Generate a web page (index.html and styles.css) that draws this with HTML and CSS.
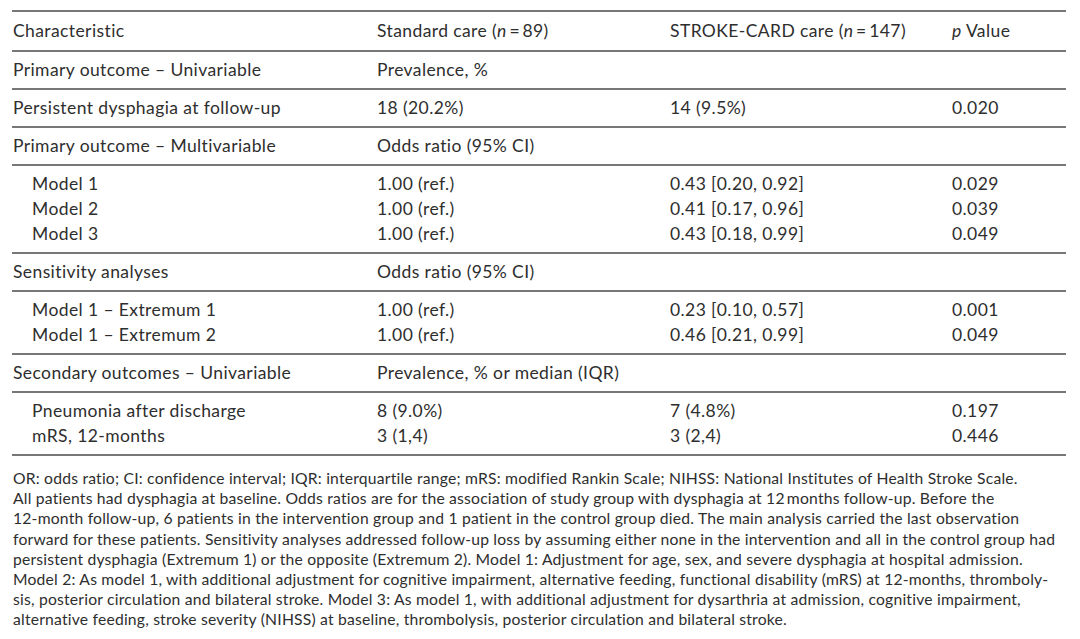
FILE: index.html
```html
<!DOCTYPE html>
<html lang="en">
<head>
<meta charset="utf-8">
<title>Table</title>
<link rel="stylesheet" href="styles.css">
</head>
<body>
<div class="page">
  <table class="outcomes">
    <colgroup>
      <col class="c1"><col class="c2"><col class="c3"><col class="c4">
    </colgroup>
    <thead>
      <tr>
        <th>Characteristic</th>
        <th>Standard care (<i>n</i>&#8201;=&#8201;89)</th>
        <th>STROKE-CARD care (<i>n</i>&#8201;=&#8201;147)</th>
        <th><i>p</i> Value</th>
      </tr>
    </thead>
    <tbody>
      <tr><td>Primary outcome – Univariable</td><td>Prevalence, %</td><td></td><td></td></tr>
    </tbody>
    <tbody>
      <tr><td>Persistent dysphagia at follow-up</td><td>18 (20.2%)</td><td>14 (9.5%)</td><td>0.020</td></tr>
    </tbody>
    <tbody>
      <tr><td>Primary outcome – Multivariable</td><td>Odds ratio (95% CI)</td><td></td><td></td></tr>
    </tbody>
    <tbody>
      <tr><td class="ind">Model 1</td><td>1.00 (ref.)</td><td>0.43 [0.20, 0.92]</td><td>0.029</td></tr>
      <tr><td class="ind">Model 2</td><td>1.00 (ref.)</td><td>0.41 [0.17, 0.96]</td><td>0.039</td></tr>
      <tr><td class="ind">Model 3</td><td>1.00 (ref.)</td><td>0.43 [0.18, 0.99]</td><td>0.049</td></tr>
    </tbody>
    <tbody>
      <tr><td>Sensitivity analyses</td><td>Odds ratio (95% CI)</td><td></td><td></td></tr>
    </tbody>
    <tbody>
      <tr><td class="ind">Model 1 – Extremum 1</td><td>1.00 (ref.)</td><td>0.23 [0.10, 0.57]</td><td>0.001</td></tr>
      <tr><td class="ind">Model 1 – Extremum 2</td><td>1.00 (ref.)</td><td>0.46 [0.21, 0.99]</td><td>0.049</td></tr>
    </tbody>
    <tbody>
      <tr><td>Secondary outcomes – Univariable</td><td>Prevalence, % or median (IQR)</td><td></td><td></td></tr>
    </tbody>
    <tbody>
      <tr><td class="ind">Pneumonia after discharge</td><td>8 (9.0%)</td><td>7 (4.8%)</td><td>0.197</td></tr>
      <tr><td class="ind">mRS, 12-months</td><td>3 (1,4)</td><td>3 (2,4)</td><td>0.446</td></tr>
    </tbody>
  </table>
  <p class="note">OR: odds ratio; CI: confidence interval; IQR: interquartile range; mRS: modified Rankin Scale; NIHSS: National Institutes of Health Stroke Scale.<br>All patients had dysphagia at baseline. Odds ratios are for the association of study group with dysphagia at 12&#8201;months follow-up. Before the<br>12-month follow-up, 6 patients in the intervention group and 1 patient in the control group died. The main analysis carried the last observation<br>forward for these patients. Sensitivity analyses addressed follow-up loss by assuming either none in the intervention and all in the control group had<br>persistent dysphagia (Extremum 1) or the opposite (Extremum 2). Model 1: Adjustment for age, sex, and severe dysphagia at hospital admission.<br>Model 2: As model 1, with additional adjustment for cognitive impairment, alternative feeding, functional disability (mRS) at 12-months, thromboly-<br>sis, posterior circulation and bilateral stroke. Model 3: As model 1, with additional adjustment for dysarthria at admission, cognitive impairment,<br>alternative feeding, stroke severity (NIHSS) at baseline, thrombolysis, posterior circulation and bilateral stroke.</p>
</div>
</body>
</html>
```

FILE: styles.css
```css
html, body {
  margin: 0;
  padding: 0;
  background: #ffffff;
}

body {
  font-family: "Lato", "Liberation Sans", sans-serif;
  color: #2e2e2e;
}

.page {
  padding: 10px 14px 0 12px;
}

.outcomes {
  width: 1054px;
  border-collapse: collapse;
  font-size: 17.5px;
  letter-spacing: 0.4px;
  table-layout: fixed;
}

.c1 { width: 364px; }
.c2 { width: 293px; }
.c3 { width: 282px; }
.c4 { width: 115px; }

.outcomes th,
.outcomes td {
  padding: 0 0 0 1px;
  text-align: left;
  font-weight: normal;
  line-height: 25px;
  white-space: nowrap;
  vertical-align: middle;
}

.outcomes thead {
  border-top: 2px solid #777;
}

.outcomes thead th {
  padding-top: 6px;
  padding-bottom: 7px;
}

.outcomes tbody {
  border-top: 2px solid #777;
}

.outcomes tbody:last-child {
  border-bottom: 2px solid #777;
}

.outcomes tbody tr:first-child td {
  padding-top: 5px;
}

.outcomes tbody tr:last-child td {
  padding-bottom: 6px;
}

.outcomes td.ind {
  padding-left: 20px;
}

.note {
  margin: 12px 0 0 1px;
  font-size: 15.7px;
  letter-spacing: 0.2px;
  line-height: 20.2px;
  color: #2e2e2e;
}
```
